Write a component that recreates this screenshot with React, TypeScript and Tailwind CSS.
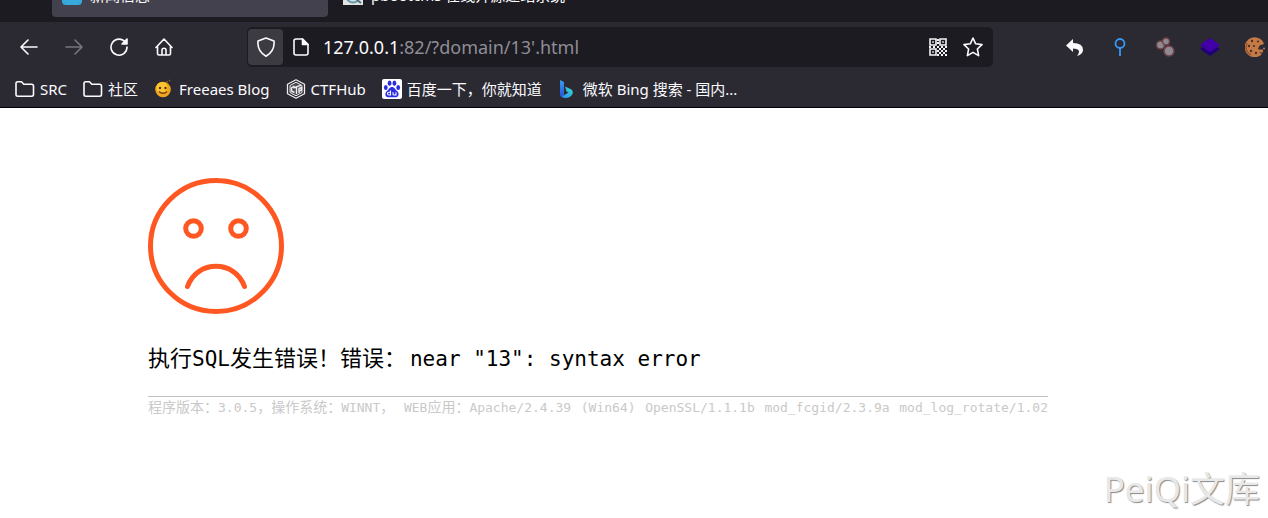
import React from 'react';

const ui = "font-['Noto_Sans','Noto_Sans_CJK_SC',sans-serif]";

function Svg({ box = '0 0 18 18', className = 'size-[18px]', children }: { box?: string; className?: string; children: React.ReactNode }) {
  return (
    <svg viewBox={box} className={'shrink-0 ' + className} fill="none" stroke="currentColor" strokeWidth="1.6" strokeLinecap="round" strokeLinejoin="round" aria-hidden="true">
      {children}
    </svg>
  );
}

const Folder = () => (
  <Svg box="0 0 20 18" className="w-5 h-[18px]">
    <path d="M1 14.5V3.5Q1 1.8 2.700 1.800H6.500L8.800 4.200H16.500Q18.500 4.200 18.500 6V14.500Q18.500 16.200 16.500 16.200H3Q1 16.200 1 14.500Z" />
  </Svg>
);

const Smiley = () => (
  <svg viewBox="0 0 20 20" className="size-5 shrink-0" aria-hidden="true">
    <circle cx="9" cy="10.500" r="7.800" fill="#f0a51c" />
    <circle cx="8" cy="8.500" r="5.500" fill="#fbc632" />
    <circle cx="6" cy="9" r="1.200" fill="#5a3210" />
    <circle cx="11.500" cy="9" r="1.200" fill="#5a3210" />
    <path d="M5 12.500Q9 16 13 12.500" stroke="#6d3b0b" strokeWidth="1.300" fill="none" />
    <path d="M12 3.500L14 2.500M15 2L16 1" stroke="#8c6a25" strokeWidth="1.200" />
  </svg>
);

const Hub = () => (
  <svg viewBox="0 0 20 20" className="size-5 shrink-0" fill="none" stroke="#eee" strokeLinejoin="round" aria-hidden="true">
    <path d="M10 .8L18.500 5.300V14.700L10 19.200L1.500 14.700V5.300Z" strokeWidth="1.300" />
    <path d="M10 3.200L16 6.500V13.500L10 16.800L4 13.500V6.500Z" strokeWidth="1" fill="#4b4a52" />
    <path d="M8.500 7L5.500 8.800V12L8.500 13.500M7.500 9L15 6.200M10.500 8.500V15M13 14V9.500L15.500 8.500V11L13 12" strokeWidth="1.400" />
  </svg>
);

const Paw = () => (
  <svg viewBox="0 0 20 20" className="size-5 shrink-0" aria-hidden="true">
    <rect width="20" height="20" rx="2" fill="#fff" />
    <g fill="#2b2de0">
      <ellipse cx="3.800" cy="8.500" rx="1.900" ry="2.500" />
      <ellipse cx="7.600" cy="4.300" rx="1.900" ry="2.700" />
      <ellipse cx="12.400" cy="4.300" rx="1.900" ry="2.700" />
      <ellipse cx="16.200" cy="8.500" rx="1.900" ry="2.500" />
      <path d="M10 8C7.500 8 7 10.500 5 12C2.500 14 3 18.300 6.200 18.300H13.800C17 18.300 17.500 14 15 12C13 10.500 12.500 8 10 8Z" />
    </g>
    <path d="M8.500 11.500V16H7Q5.500 16 5.500 14.600T7 13.300H8.500M11 13.200V15Q11 16 12 16H14V13.200" stroke="#fff" strokeWidth="1.100" fill="none" />
  </svg>
);

const Bing = () => (
  <svg viewBox="0 0 20 20" className="size-5 shrink-0" aria-hidden="true">
    <defs>
      <linearGradient id="stem" x2="0" y2="1"><stop stopColor="#3b9df0" /><stop offset="1" stopColor="#2554d5" /></linearGradient>
      <linearGradient id="bowl" x1="1" y1="0" x2="0" y2="1"><stop stopColor="#35e0d0" /><stop offset="1" stopColor="#2a8af0" /></linearGradient>
    </defs>
    <path d="M7 7.500L13 10.300Q15.500 12 14.500 15Q12 19.500 6.500 19Q3 18.500 2.300 15.500L6.500 16L10.500 13.500L8.500 12.500Z" fill="url(#bowl)" />
    <path d="M2 1L6 3V16Q4.500 19 2.500 17Q2 16 2 15Z" fill="url(#stem)" />
  </svg>
);

const Qr = () => (
  <svg viewBox="0 0 18 18" className="size-[18px] shrink-0" fill="none" stroke="#f3f3f5" aria-hidden="true">
    <path d="M1 1H7V7H1ZM11 1H17V7H11ZM1 11H7V17H1Z" strokeWidth="1.600" />
    <path d="M3.200 4H4.800M13.200 4H14.800M3.200 14H4.800" strokeWidth="1.600" />
    <path d="M8 2H10M8 5H10M0 9H2M4 9H6M8 9H10M12 9H14M16 9H18M10 11H12M14 11H16M8 13H10M12 13H14M16 13H18M10 15H12M14 15H16M8 17H10M12 17H14M16 17H18" strokeWidth="2" />
  </svg>
);

const Cookie = () => (
  <svg viewBox="0 0 20 20" className="size-5 shrink-0" aria-hidden="true">
    <path d="M15 1.800A10 10 0 1 0 17 17L14.500 15.500L16 13L13 12L14.500 8.500L19 7Q18.500 4 15 1.800Z" fill="#c47a47" />
    <path d="M2 6Q-1 14 6 18" stroke="#985630" strokeWidth="1.500" fill="none" />
    <g fill="#54301f">
      <circle cx="7" cy="4" r="1.200" /><circle cx="13" cy="4.500" r="1.100" /><circle cx="4" cy="9" r="1.200" />
      <circle cx="9" cy="9" r="1.100" /><circle cx="6" cy="14" r="1.200" /><circle cx="11" cy="16" r="1.200" />
    </g>
    <circle cx="16.500" cy="14" r="1.700" fill="#c47a47" /><circle cx="19" cy="11.500" r="1" fill="#c47a47" />
  </svg>
);

const bookmarks = [
  { label: 'SRC', icon: <Folder /> },
  { label: '社区', icon: <Folder /> },
  { label: 'Freeaes Blog', icon: <Smiley /> },
  { label: 'CTFHub', icon: <Hub /> },
  { label: '百度一下，你就知道', icon: <Paw /> },
  { label: '微软 Bing 搜索 - 国内...', icon: <Bing /> },
];

const modules = ['(Win64)', 'OpenSSL/1.1.1b', 'mod_fcgid/2.3.9a', 'mod_log_rotate/1.02'];

const Han = ({ children }: { children: React.ReactNode }) => <span className="text-[14px]">{children}</span>;

export default function App() {
  return (
    <div className="flex min-h-screen flex-col bg-white">
      <header className={'bg-[#2b2a33] text-[#fbfbfe] border-b border-black ' + ui}>
        <div role="tablist" className="flex h-[22px] items-start overflow-hidden bg-[#1c1b22] pl-[52px] text-[15px]">
          <button role="tab" aria-selected="true" className="flex h-[17px] w-[276px] shrink-0 items-end gap-2 rounded-b bg-[#42414d] pb-3 pl-2.5">
            <span className="h-5 w-5 shrink-0 rounded-sm bg-[#36a9dd]" />
            <span className="leading-5">新闻信息</span>
          </button>
          <button role="tab" aria-selected="false" className="flex h-[17px] shrink-0 items-end gap-2 pb-3 pl-[15px]">
            <svg viewBox="0 0 20 20" className="size-5 shrink-0" aria-hidden="true">
              <rect width="20" height="20" fill="#e2e4e4" />
              <circle cx="10" cy="11" r="6.500" fill="#cfe3ea" stroke="#6a97a6" strokeWidth="2" />
              <path d="M14 15L18 18" stroke="#4a7482" strokeWidth="2" />
            </svg>
            <span className="leading-5">pbootcms 在线开源建站系统</span>
          </button>
        </div>

        <div className="flex h-[51px] items-center pb-px pl-5">
          <nav className="flex w-[227px] shrink-0 items-center gap-[27px]">
            <button aria-label="Back"><Svg><path d="M1 9H17M8 2L1 9L8 16" /></Svg></button>
            <button aria-label="Forward" className="text-[#76757c]" disabled><Svg><path d="M1 9H17M10 2L17 9L10 16" /></Svg></button>
            <button aria-label="Reload"><Svg><path d="M15.500 4.500A8 8 0 1 0 17 9" /><path d="M17 1V6H12Z" fill="currentColor" /></Svg></button>
            <button aria-label="Home"><Svg><path d="M1 9.500L9 1L17 9.500M2.500 8V15.500Q2.500 17 4 17H14Q15.500 17 15.500 15.500V8M7 16.500V12Q7 10.200 9 10.200T11 12V16.500" /></Svg></button>
          </nav>
          <div className="flex h-10 min-w-0 grow items-center rounded-[5px] bg-[#1c1b22] pl-px pr-2.5">
            <button aria-label="Tracking protection" className="flex h-9 w-[35px] shrink-0 items-center justify-center rounded bg-[#3c3b42]">
              <Svg box="0 0 20 20" className="size-5"><path d="M10 1L18 4Q19 14 10 19.200Q1 14 2 4Z" /></Svg>
            </button>
            <Svg className="ml-[9px] size-[18px]"><path d="M4 1H10.500L16 6.500V15Q16 17 14 17H4Q2 17 2 15V3Q2 1 4 1Z" /><path d="M10.500 1V6.500H16Z" fill="currentColor" /></Svg>
            <div role="textbox" aria-label="Address" className="ml-[13px] min-w-0 grow truncate text-[18px] leading-6 text-[#8f8e95]">
              <span className="text-[#fbfbfe]">127.0.0.1</span>:82/?domain/13'.html
            </div>
            <button aria-label="QR code"><Qr /></button>
            <button aria-label="Bookmark this page" className="ml-4"><Svg box="0 0 20 20" className="size-5"><path d="M10 1L12.700 6.800L19 7.600L14.400 12L15.600 18.600L10 15.400L4.400 18.600L5.600 12L1 7.600L7.300 6.800Z" /></Svg></button>
          </div>
          <div className="ml-[72px] mr-[3px] flex shrink-0 items-center gap-[25px]">
            <button aria-label="Undo"><svg viewBox="0 0 20 20" className="size-5" fill="#fbfbfe"><path d="M8 2V6Q18 6 18 13Q18 17 12 19Q15 15 13.500 13Q12 11.500 8 11.500V15L1 8.500Z" /></svg></button>
            <button aria-label="Pin"><svg viewBox="0 0 20 20" className="size-5" fill="none" stroke="#3897f5" strokeWidth="1.800"><circle cx="10" cy="6.500" r="4.500" /><path d="M10 11V19" /></svg></button>
            <button aria-label="Network"><svg viewBox="0 0 20 20" className="size-5" fill="#8e8a90" stroke="#704149" strokeWidth="1.500"><circle cx="5.500" cy="8" r="4" /><circle cx="11" cy="4.500" r="3.500" /><circle cx="14" cy="14" r="5" /></svg></button>
            <button aria-label="Layers"><svg viewBox="0 0 20 20" className="size-5"><path d="M0 12L10 6L20 12L10 19Z" fill="#210074" /><path d="M0 8L10 1L20 8L10 15Z" fill="#4200ab" /></svg></button>
            <button aria-label="Cookies"><Cookie /></button>
          </div>
        </div>

        <nav className="flex h-[34px] items-center gap-4 overflow-hidden whitespace-nowrap pb-0.5 pl-[15px] text-[15px] leading-5">
          {bookmarks.map((b) => (
            <a key={b.label} href="#" className="flex shrink-0 items-center gap-[5px]">
              {b.icon}
              <span>{b.label}</span>
            </a>
          ))}
        </nav>
      </header>

      <main className="max-w-[1048px] pl-[148px] pt-[70px]">
        <svg viewBox="0 0 136 136" className="size-[136px]" fill="none" stroke="#ff5722" strokeWidth="5" strokeLinecap="round" role="img" aria-label="Sad face">
          <circle cx="68" cy="68" r="65.500" />
          <circle cx="45.500" cy="50.500" r="7.800" />
          <circle cx="90.500" cy="50.500" r="7.800" />
          <path d="M39.500 108.500C49 81.500 87 81.500 96.500 108.500" />
        </svg>
        <h1 className="mt-[29px] flex flex-wrap items-baseline gap-x-1 font-['DejaVu_Sans_Mono','Noto_Sans_CJK_SC',monospace] text-[21px] leading-8 text-black">
          <span><span className="text-[22px]">执行</span>SQL<span className="text-[22px]">发生错误！错误：</span></span>
          <span>near "13": syntax error</span>
        </h1>
        <p className="mt-[21px] flex items-baseline justify-between whitespace-nowrap border-t border-[#c2c2c2] font-['DejaVu_Sans_Mono','Noto_Sans_CJK_SC',monospace] text-[13px] leading-5 text-[#c9c9c9]">
          <span><Han>程序版本：</Han>3.0.5<Han>，操作系统：</Han>WINNT<Han>，</Han></span>
          <span>WEB<Han>应用：</Han>Apache/2.4.39</span>
          {modules.map((part) => <span key={part}>{part}</span>)}
        </p>
      </main>

      <footer className={'mt-auto self-end pb-[5px] pr-2 text-[35px] leading-[48px] text-[#e8e8e8] [text-shadow:1px_1px_1px_#888] ' + ui}>PeiQi文库</footer>
    </div>
  );
}
